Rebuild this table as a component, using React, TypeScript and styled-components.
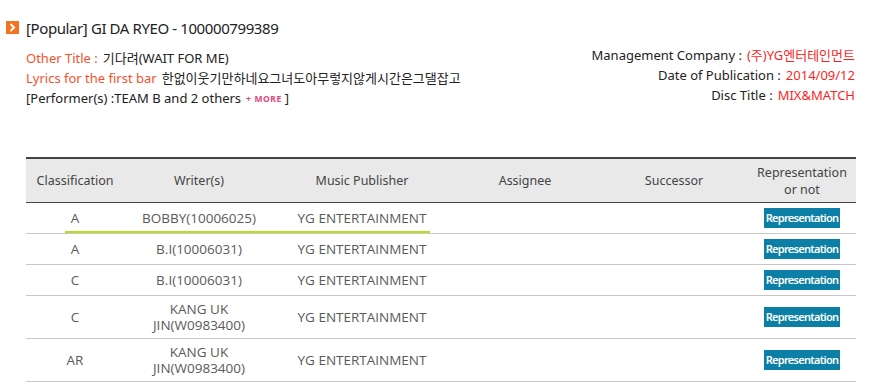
import styled, { createGlobalStyle } from "styled-components";

// 페이지 기본 스타일
const GlobalStyle = createGlobalStyle`
  body {
    margin: 0;
    background: #fff;
    font-family: "Noto Sans", "Noto Sans CJK KR", sans-serif;
    color: #333;
  }
`;

const Page = styled.div`
  width: 885px;
  height: 390px;
  padding: 19px 0 0 6px;
  box-sizing: border-box;
`;

// 제목줄
const TitleRow = styled.div`
  display: flex;
  align-items: center;
  gap: 7px;
  height: 17px;
`;

const TitleIcon = styled.span`
  width: 13px;
  height: 13px;
  background: #f47321;
  display: flex;
  align-items: center;
  justify-content: center;
`;

const TitleText = styled.h1`
  margin: 0;
  font-size: 15px;
  font-weight: 400;
  letter-spacing: -0.4px;
  color: #222;
`;

// 곡 정보
const Info = styled.div`
  display: flex;
  justify-content: space-between;
  align-items: flex-start;
  margin: 9px 30px 0 20px;
`;

const InfoLeft = styled.div`
  display: flex;
  flex-direction: column;
  padding-top: 3px;
`;

const InfoRight = styled.div`
  display: flex;
  flex-direction: column;
  align-items: flex-end;
`;

const Line = styled.div`
  font-size: 13px;
  line-height: 20px;
  color: #222;
  white-space: nowrap;
`;

const Label = styled.span<{ $tone?: "accent" | "dark" }>`
  color: ${({ $tone }) => ($tone === "accent" ? "#f4522b" : "#222")};
  margin-right: 5px;
`;

const Value = styled.span<{ $red?: boolean }>`
  color: ${({ $red }) => ($red ? "#ff1f1f" : "#222")};
`;

const MoreBtn = styled.span`
  color: #e2487e;
  font-size: 8.5px;
  font-weight: 700;
  letter-spacing: 0.6px;
  margin: 0 3px 0 5px;
  vertical-align: 1px;
`;

// 권리자 테이블
const TableWrap = styled.div`
  position: relative;
  margin: 48px 0 0 20px;
  width: 830px;
`;

const Table = styled.table`
  width: 830px;
  border-collapse: collapse;
  table-layout: fixed;
`;

const Th = styled.th`
  height: 43px;
  padding: 0 6px;
  background: #e9e9e9;
  border-top: 2px solid #444;
  border-bottom: 1px solid #444;
  font-size: 12.5px;
  font-weight: 400;
  line-height: 17px;
  color: #444;
  text-align: center;
`;

const Td = styled.td`
  height: 31px;
  padding: 5px 10px;
  border-bottom: 1px solid #c8c8c8;
  font-family: "Open Sans", "Noto Sans", sans-serif;
  font-size: 13.5px;
  line-height: 16px;
  color: #5a5a5a;
  text-align: center;
  box-sizing: border-box;
`;

const RepButton = styled.span`
  display: inline-flex;
  align-items: center;
  justify-content: center;
  width: 76px;
  height: 20px;
  background: #0b7fa5;
  color: #fff;
  font-family: "Noto Sans", sans-serif;
  font-size: 11px;
  font-weight: 600;
  letter-spacing: -0.7px;
  cursor: pointer;
`;

// 마우스 오버 표시선
const Highlight = styled.div`
  position: absolute;
  left: 39px;
  width: 365px;
  top: 74px;
  height: 2px;
  background: #b6e01c;
`;

const cols = [98, 150, 176, 150, 148, 108];

const headers = [
  "Classification",
  "Writer(s)",
  "Music Publisher",
  "Assignee",
  "Successor",
  "Representation or not",
];

type Row = { cls: string; writer: string; publisher: string };

const rows: Row[] = [
  { cls: "A", writer: "BOBBY(10006025)", publisher: "YG ENTERTAINMENT" },
  { cls: "A", writer: "B.I(10006031)", publisher: "YG ENTERTAINMENT" },
  { cls: "C", writer: "B.I(10006031)", publisher: "YG ENTERTAINMENT" },
  { cls: "C", writer: "KANG UK JIN(W0983400)", publisher: "YG ENTERTAINMENT" },
  { cls: "AR", writer: "KANG UK JIN(W0983400)", publisher: "YG ENTERTAINMENT" },
];

const App = () => {
  return (
    <Page>
      <GlobalStyle />
      <TitleRow>
        <TitleIcon>
          <svg width="7" height="9" viewBox="0 0 7 9">
            <path d="M1.5 1 L5 4.5 L1.5 8" stroke="#fff" strokeWidth="2" fill="none" />
          </svg>
        </TitleIcon>
        <TitleText>[Popular] GI DA RYEO - 100000799389</TitleText>
      </TitleRow>

      <Info>
        <InfoLeft>
          <Line>
            <Label $tone="accent">Other Title :</Label>
            <Value>기다려(WAIT FOR ME)</Value>
          </Line>
          <Line>
            <Label $tone="accent">Lyrics for the first bar</Label>
            <Value>한없이웃기만하네요그녀도아무렇지않게시간은그댈잡고</Value>
          </Line>
          <Line>
            [Performer(s) :TEAM B and 2 others
            <MoreBtn>+ MORE</MoreBtn>]
          </Line>
        </InfoLeft>
        <InfoRight>
          <Line>
            <Label>Management Company :</Label>
            <Value $red>(주)YG엔터테인먼트</Value>
          </Line>
          <Line>
            <Label>Date of Publication :</Label>
            <Value $red>2014/09/12</Value>
          </Line>
          <Line>
            <Label>Disc Title :</Label>
            <Value $red>MIX&amp;MATCH</Value>
          </Line>
        </InfoRight>
      </Info>

      <TableWrap>
        <Table>
          <colgroup>
            {cols.map((w, i) => (
              <col key={i} style={{ width: w }} />
            ))}
          </colgroup>
          <thead>
            <tr>
              {headers.map((h) => (
                <Th key={h}>{h}</Th>
              ))}
            </tr>
          </thead>
          <tbody>
            {rows.map((r, i) => (
              <tr key={i}>
                <Td>{r.cls}</Td>
                <Td>{r.writer}</Td>
                <Td>{r.publisher}</Td>
                <Td></Td>
                <Td></Td>
                <Td>
                  <RepButton>Representation</RepButton>
                </Td>
              </tr>
            ))}
          </tbody>
        </Table>
        <Highlight />
      </TableWrap>
    </Page>
  );
};

export default App;
